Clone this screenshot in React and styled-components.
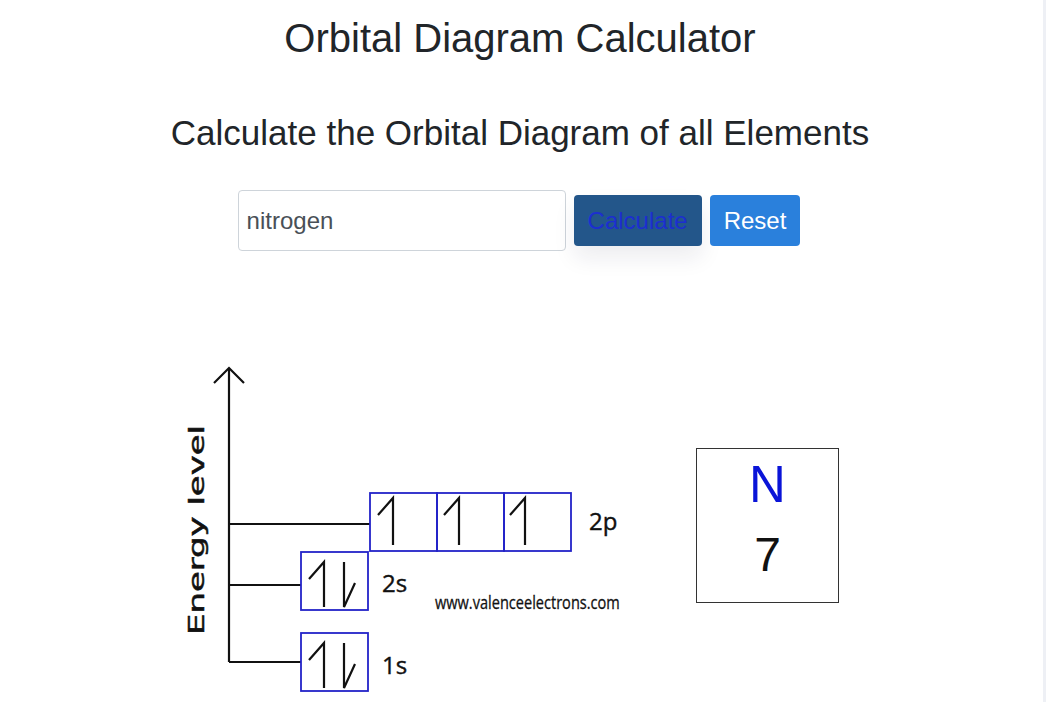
import React from 'react';
import styled, { createGlobalStyle } from 'styled-components';

const GlobalStyle = createGlobalStyle`
  html, body {
    margin: 0;
    padding: 0;
    background: #ffffff;
  }
  body {
    font-family: "Liberation Sans", Arial, sans-serif;
    color: #212529;
  }
`;

const Page = styled.div`
  box-sizing: border-box;
  min-height: 702px;
  width: 1046px;
  border-right: 3px solid #eef0f5;
  padding-right: 3px;
  display: flex;
  flex-direction: column;
  align-items: center;
  overflow: hidden;
`;

const Title = styled.h1`
  margin: 14px 0 0;
  font-size: 40px;
  font-weight: 400;
  line-height: 1.2;
  color: #212529;
`;

const Subtitle = styled.h2`
  margin: 50px 0 0;
  font-size: 35px;
  font-weight: 400;
  line-height: 1.2;
  color: #212529;
`;

const SearchForm = styled.form`
  display: flex;
  align-items: center;
  gap: 8px;
  margin: 36px 0 0;
  padding-right: 2px;
`;

const ElementInput = styled.input`
  box-sizing: border-box;
  width: 328px;
  height: 61px;
  padding: 0 8px;
  border: 1px solid #ced4da;
  border-radius: 4px;
  font-family: "Liberation Sans", Arial, sans-serif;
  font-size: 24px;
  color: #495057;
  outline: none;
`;

const Button = styled.button`
  box-sizing: border-box;
  height: 51px;
  padding: 0 14px;
  border: none;
  border-radius: 4px;
  font-family: "Liberation Sans", Arial, sans-serif;
  font-size: 24px;
  cursor: pointer;
  background: ${p => (p.$primary ? '#23568a' : '#2a80dc')};
  color: ${p => (p.$primary ? '#1c2ed0' : '#ffffff')};
  box-shadow: ${p => (p.$primary ? '0 12px 22px rgba(20, 30, 60, 0.08)' : 'none')};
`;

const ResultRow = styled.div`
  align-self: stretch;
  display: flex;
  align-items: flex-start;
  margin-top: 109px;
  padding-left: 180px;
`;

const Diagram = styled.svg`
  display: block;
  flex-shrink: 0;
`;

const ElementCard = styled.div`
  box-sizing: border-box;
  width: 143px;
  height: 155px;
  margin: 88px 0 0 46px;
  border: 1px solid #333333;
  display: flex;
  flex-direction: column;
  align-items: center;
  padding-top: 6px;
  gap: 10px;
  font-family: "Liberation Sans", Arial, sans-serif;
`;

const Symbol = styled.div`
  font-size: 51px;
  line-height: 60px;
  color: #0a14d8;
`;

const AtomicNumber = styled.div`
  font-size: 48px;
  line-height: 60px;
  color: #111111;
`;

const BLUE = '#2323c8';
const LABEL_FONT = "'Open Sans', 'DejaVu Sans', sans-serif";

const UpSpin = ({ x, y, h }) => (
  <path d={`M${x - 15} ${y + 17} L${x} ${y} L${x} ${y + h}`} fill="none" stroke="#111" strokeWidth="2.2" />
);

const DownSpin = ({ x, y, h }) => (
  <path d={`M${x} ${y} L${x} ${y + h} L${x + 11} ${y + h - 24}`} fill="none" stroke="#111" strokeWidth="2.2" />
);

const PairBox = ({ y }) => (
  <g>
    <rect x="121" y={y} width="67" height="58" fill="none" stroke={BLUE} strokeWidth="1.8" />
    <UpSpin x={144} y={y + 10} h={45} />
    <DownSpin x={164} y={y + 10} h={45} />
  </g>
);

const OrbitalDiagram = () => (
  <Diagram width="470" height="340" viewBox="0 0 470 340">
    <text
      transform="translate(24 170) rotate(-90)"
      textAnchor="middle"
      fontFamily="'DejaVu Sans', Verdana, sans-serif"
      fontSize="21"
      fill="#111"
      stroke="#111"
      strokeWidth="0.5"
      textLength="210"
      lengthAdjust="spacingAndGlyphs"
    >
      Energy level
    </text>

    <g stroke="#111" strokeWidth="2.2" fill="none">
      <path d="M49 9 L49 302" />
      <path d="M34 23 L49 8 L64 23" />
      <path d="M49 164 L190 164" />
      <path d="M49 225 L121 225" />
      <path d="M49 302 L121 302" />
    </g>

    {[0, 1, 2].map(i => (
      <g key={i}>
        <rect x={190 + i * 67} y="133" width="67" height="58" fill="none" stroke={BLUE} strokeWidth="1.8" />
        <UpSpin x={213 + i * 66} y={138} h={47} />
      </g>
    ))}

    <PairBox y={192} />
    <PairBox y={273} />

    <g fontFamily={LABEL_FONT} fill="#111" fontSize="24" stroke="#111" strokeWidth="0.4">
      <text x="409" y="170">2p</text>
      <text x="202" y="232">2s</text>
      <text x="202" y="314">1s</text>
    </g>
    <text
      transform="translate(255 249) scale(0.8 1)"
      fontFamily={LABEL_FONT}
      fontSize="18"
      fill="#111"
      stroke="#111"
      strokeWidth="0.3"
      textLength="231"
      lengthAdjust="spacingAndGlyphs"
    >
      www.valenceelectrons.com
    </text>
  </Diagram>
);

const App = () => {
  return (
    <Page>
      <GlobalStyle />
      <Title>Orbital Diagram Calculator</Title>
      <Subtitle>Calculate the Orbital Diagram of all Elements</Subtitle>
      <SearchForm onSubmit={e => e.preventDefault()}>
        <ElementInput defaultValue="nitrogen" />
        <Button type="submit" $primary>Calculate</Button>
        <Button type="button">Reset</Button>
      </SearchForm>
      <ResultRow>
        <OrbitalDiagram />
        <ElementCard>
          <Symbol>N</Symbol>
          <AtomicNumber>7</AtomicNumber>
        </ElementCard>
      </ResultRow>
    </Page>
  );
};

export default App;
